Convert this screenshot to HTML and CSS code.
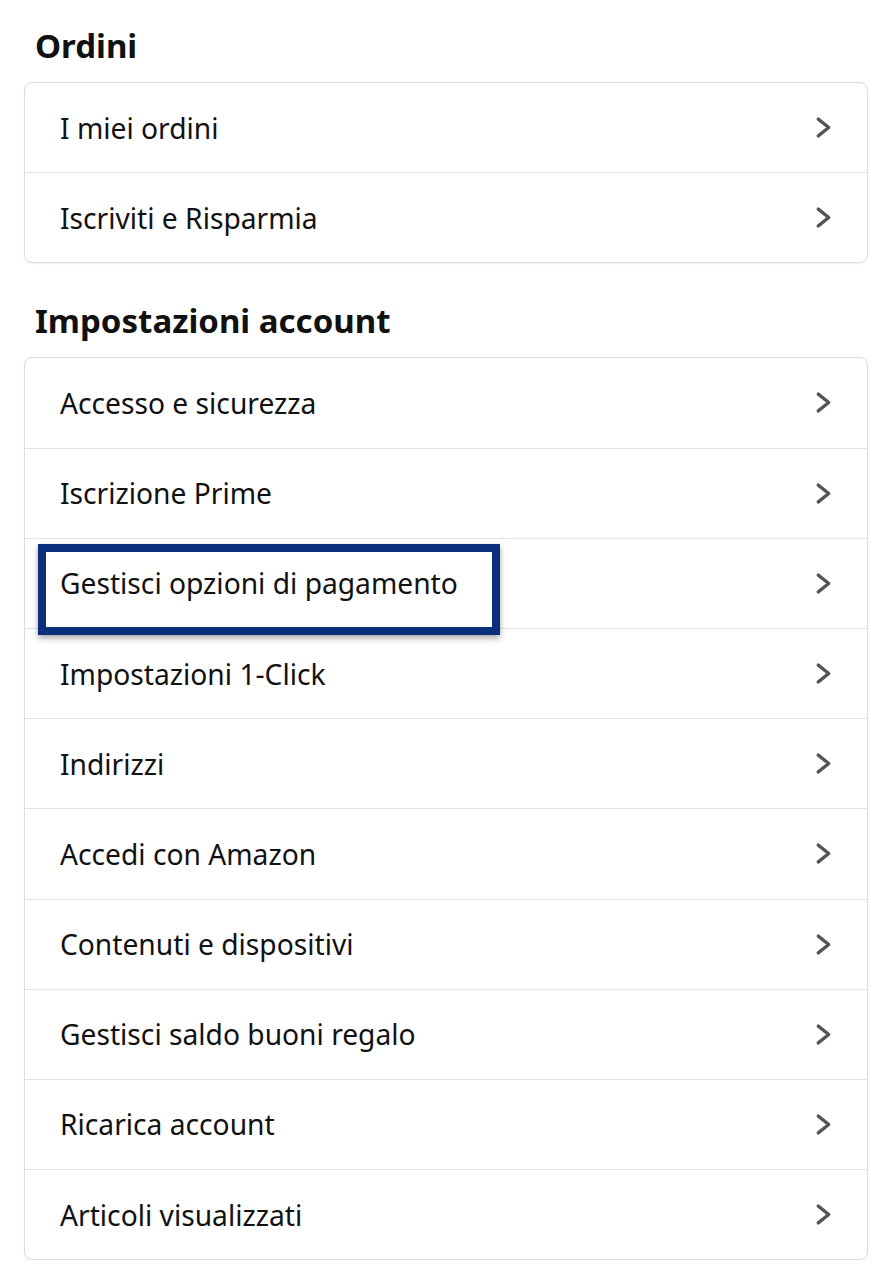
FILE: index.html
```html
<!DOCTYPE html>
<html lang="it">
<head>
<meta charset="utf-8">
<link rel="stylesheet" href="styles.css">
</head>
<body>
<main class="page">
  <section class="section">
    <h2 class="section-title">Ordini</h2>
    <div class="card">
      <div class="row"><span class="label">I miei ordini</span><svg class="chev" viewBox="0 0 16 22"><path d="M3 3 L13 11 L3 19"/></svg></div>
      <div class="row"><span class="label">Iscriviti e Risparmia</span><svg class="chev" viewBox="0 0 16 22"><path d="M3 3 L13 11 L3 19"/></svg></div>
    </div>
  </section>
  <section class="section">
    <h2 class="section-title">Impostazioni account</h2>
    <div class="card">
      <div class="row"><span class="label">Accesso e sicurezza</span><svg class="chev" viewBox="0 0 16 22"><path d="M3 3 L13 11 L3 19"/></svg></div>
      <div class="row"><span class="label">Iscrizione Prime</span><svg class="chev" viewBox="0 0 16 22"><path d="M3 3 L13 11 L3 19"/></svg></div>
      <div class="row"><span class="highlight"></span><span class="label">Gestisci opzioni di pagamento</span><svg class="chev" viewBox="0 0 16 22"><path d="M3 3 L13 11 L3 19"/></svg></div>
      <div class="row"><span class="label">Impostazioni 1-Click</span><svg class="chev" viewBox="0 0 16 22"><path d="M3 3 L13 11 L3 19"/></svg></div>
      <div class="row"><span class="label">Indirizzi</span><svg class="chev" viewBox="0 0 16 22"><path d="M3 3 L13 11 L3 19"/></svg></div>
      <div class="row"><span class="label">Accedi con Amazon</span><svg class="chev" viewBox="0 0 16 22"><path d="M3 3 L13 11 L3 19"/></svg></div>
      <div class="row"><span class="label">Contenuti e dispositivi</span><svg class="chev" viewBox="0 0 16 22"><path d="M3 3 L13 11 L3 19"/></svg></div>
      <div class="row"><span class="label">Gestisci saldo buoni regalo</span><svg class="chev" viewBox="0 0 16 22"><path d="M3 3 L13 11 L3 19"/></svg></div>
      <div class="row"><span class="label">Ricarica account</span><svg class="chev" viewBox="0 0 16 22"><path d="M3 3 L13 11 L3 19"/></svg></div>
      <div class="row"><span class="label">Articoli visualizzati</span><svg class="chev" viewBox="0 0 16 22"><path d="M3 3 L13 11 L3 19"/></svg></div>
    </div>
  </section>
</main>
</body>
</html>
```

FILE: styles.css
```css
html, body {
  margin: 0;
  padding: 0;
  background: #ffffff;
}

body {
  font-family: "Noto Sans", "Open Sans", sans-serif;
  color: #111111;
}

.page {
  padding: 26px 21px 0 24px;
  display: flex;
  flex-direction: column;
  gap: 38px;
}

.section {
  display: flex;
  flex-direction: column;
  gap: 16px;
}

.section-title {
  margin: 0 0 0 11px;
  font-size: 33px;
  line-height: 40px;
  font-weight: 700;
  color: #111111;
}

.card {
  border: 1px solid #dcdcdc;
  border-radius: 8px;
  box-shadow: 0 1px 2px rgba(0, 0, 0, 0.06);
  display: flex;
  flex-direction: column;
}

.row {
  position: relative;
  height: 89.2px;
  display: flex;
  align-items: center;
  justify-content: space-between;
  padding: 0 35px 0 35px;
  border-top: 1px solid #e3e3e3;
}

.row:first-child {
  border-top: none;
}

.label {
  font-size: 28.2px;
  line-height: 38px;
  color: #111111;
}

.chev {
  width: 17px;
  height: 23px;
  fill: none;
  stroke: #555555;
  stroke-width: 3.2;
  stroke-linecap: round;
  stroke-linejoin: round;
}

.highlight {
  position: absolute;
  left: 13px;
  top: 5px;
  width: 462px;
  height: 91px;
  box-sizing: border-box;
  border: 8px solid #0c2f7b;
  box-shadow: 0 3px 6px rgba(0, 0, 0, 0.35);
  z-index: 1;
  pointer-events: none;
}
```
